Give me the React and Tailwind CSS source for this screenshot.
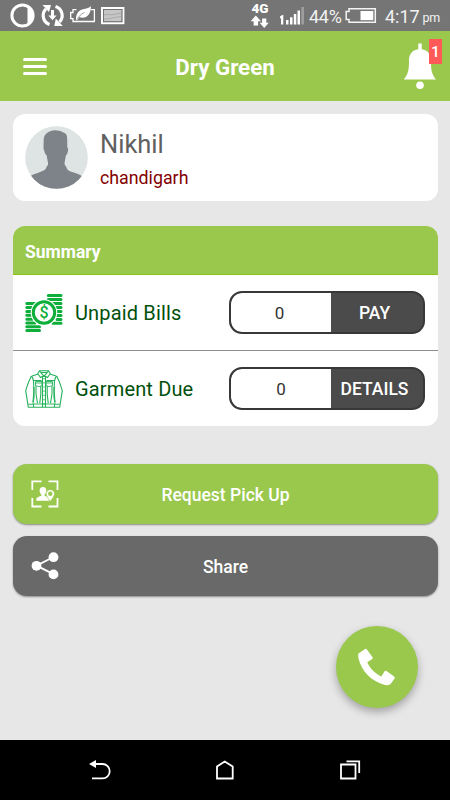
import React from 'react';

// Android status bar: notification icons on the left, signal and clock on the right.
function StatusBar() {
  return (
    <div className="flex h-[31px] items-center bg-[#757575] text-white">
      <svg className="ml-[10px] h-[31px] w-[116px] shrink-0" viewBox="10 0 116 31" fill="none">
        <circle cx="22.5" cy="15.5" r="10.6" stroke="#fff" strokeWidth="3" />
        <path d="M27.5 6a10.6 10.6 0 0 1 0 19z" fill="#fff" />
        <g stroke="#fff" strokeWidth="3.2">
          <path d="M49.5 24.4A9.400 9.400 0 0 1 46 8.800" />
          <path d="M55.500 6.500A9.400 9.400 0 0 1 59.500 22" />
        </g>
        <path d="M42.5 5h8.500l-2 7z" fill="#fff" />
        <path d="M62.800 26h-8.500l1.500-7.500z" fill="#fff" />
        <path d="M51 10h3v5.500h2.600l-4.100 4.700-4.100-4.700H51z" fill="#fff" />
        <path d="M76.500 9.700H73v2.800h-2.300v6.200H73v2.800h21.400V9.700h-3.500" stroke="#fff" strokeWidth="1.300" />
        <path
          d="M76 20c-.3-6 2.500-9.800 7-10.800 3-.6 5.500-.7 8-2.900-.1 5.500-1.800 9-5 10.600-2.600 1.200-5 .8-6.500.1L77 20.500z"
          fill="#fff"
        />
        <path d="M77 19.500c2-3.500 4-5.500 7.500-7" stroke="#757575" strokeWidth="0.7" />
        <rect x="102" y="8" width="21.400" height="15.200" stroke="#fff" strokeWidth="2" />
        <rect x="103.500" y="9.500" width="18.400" height="12.200" fill="#c6c6c6" stroke="#686868" strokeWidth="0.8" />
        <path d="M104 15c5-1.500 7 .5 10-.5 3-.8 5-1 7.500-1.500M104 19c5 .5 8-1.500 17.500-2.500" stroke="#a8a8a8" strokeWidth="1" />
      </svg>
      <svg className="ml-[124px] h-[31px] w-[20px] shrink-0" viewBox="250 0 20 31">
        <text x="251.500" y="12.600" textLength="17" lengthAdjust="spacingAndGlyphs" fill="#fff" fontFamily="Roboto, sans-serif" fontSize="13.500" fontWeight="900">4G</text>
        <path d="M255.800 15.500l5.200 5.700h-2.900v4.300h-4.500v-4.300h-2.900z" fill="#fff" />
        <path d="M264.200 28l-4.600-5.300h2.500v-4.300h4.200v4.300h2.500z" fill="#fff" />
      </svg>
      <svg className="ml-[9px] h-[31px] w-[26px] shrink-0" viewBox="279 0 26 31">
        <path d="M280 16.500l2.300-1.500h1v9.500H281v-6.600l-1 .6z" fill="#fff" />
        <path d="M286 20h2.500v4.500H286zM290 17.300h2.500v7.200H290zM293.800 14h2.500v10.500h-2.500zM297.500 10.500h2.500v14h-2.500z" fill="#fff" />
        <path d="M301.300 7h2.700v17.500h-2.700z" fill="#9d9d9d" />
      </svg>
      <span className="ml-[4px] mt-[3px] w-[34px] whitespace-nowrap text-[18px] leading-none tracking-[-0.3px] text-[#f2f2f2]">44%</span>
      <svg className="ml-[1px] h-[31px] w-[34px] shrink-0" viewBox="344 0 34 31" fill="none">
        <path d="M349 8.800h26.300v13.500H349v-2.700h-2.800v-8H349z" stroke="#f4f4f4" strokeWidth="1.500" />
        <path d="M360.500 11h12.800v9.200h-12.800z" fill="#fff" />
      </svg>
      <span className="ml-[7px] mt-[3px] w-[37.500px] whitespace-nowrap text-[18px] leading-none text-[#f2f2f2]">4:17</span>
      <span className="mt-[6px] text-[12.500px] leading-none tracking-[-0.300px] text-[#f2f2f2]">pm</span>
    </div>
  );
}

function Header() {
  return (
    <div className="flex h-[70px] bg-[#99c84d] text-white">
      <div className="ml-[23px] mt-[27px] flex w-[25px] flex-col gap-[3.400px]">
        <span className="h-[3.400px] w-[24px] rounded-sm bg-white" />
        <span className="h-[3.400px] w-[24px] rounded-sm bg-white" />
        <span className="h-[3.400px] w-[24px] rounded-sm bg-white" />
      </div>
      <h1 className="mt-[21px] flex-1 pl-[2px] text-center text-[22.300px] leading-[30px] font-bold">Dry Green</h1>
      <div className="relative w-[50px]">
        <svg className="h-[70px] w-[50px]" viewBox="400 31 50 70" fill="#fff">
          <path d="M418.300 43.500h3.400v5.700c6.300.8 9.300 5.300 9.300 11.300 0 9.500.5 13.500 5 19h-32.200c4.500-5.500 5.200-9.500 5.200-19 0-6 3-10.500 9.300-11.300z" />
          <circle cx="420" cy="85.200" r="3.800" />
        </svg>
        <span className="absolute top-[8px] left-[29px] h-[25px] w-[13px] bg-[#ff5a58] text-center text-[15px] leading-[27px] font-medium">1</span>
      </div>
    </div>
  );
}

function Avatar() {
  return (
    <svg className="h-[63px] w-[63px] shrink-0" viewBox="0 0 63 63">
      <defs>
        <clipPath id="avatarClip">
          <circle cx="31.500" cy="31.500" r="31.300" />
        </clipPath>
      </defs>
      <g clipPath="url(#avatarClip)">
        <path d="M0 0h63v63H0z" fill="#dee3e4" />
        <path
          d="M18.500 21.500l.2-7.500c0-3 1-6 4-7.500C26.500 4 30 3.800 34 4.700c2 .4 3 .9 4.500 1.900 3 .8 3.700 3.400 3.700 6.400l.1 8.500c1.200.2 1 2.500.4 4.500-.3 1.500-.7 3-1.700 3-.5 3.500-1.500 7-1.500 9 .4 1.500 1.500 2 2 3.500.5 2.500 2.500 3.500 5 4.300 4 1.300 8 2.700 11 4.700V63H5V50.500c3-2 6-3 9.500-4.200 3.500-1.100 6.500-2.500 6.800-5 .5-1.300 1.800-1.800 1.800-3.300 0-2-1-5-1.500-9-1-.1-1.700-1.500-2-3-.6-2.300-1.500-4.300-1.100-4.500z"
          fill="#7e8289"
        />
      </g>
    </svg>
  );
}

function MoneyIcon() {
  return (
    <svg className="h-[38px] w-[38px] shrink-0" viewBox="0 0 38 38">
      <g stroke="#0eae3b" strokeWidth="3" strokeLinecap="round">
        <path d="M23.300 1.500h12.700M23.300 5.500h12.700M28 9.500h8M30 13.500h6M32 17.500h4M32 21.500h4M32 25.500h4M28 29.300h8" />
        <path d="M1.800 9.500H10M1.800 13.500H7M1.800 17.500H6M1.800 21.300H6M1.800 25.200H7M1.800 29H10M1.800 32.800h12.700M1.800 36.500h12.700" />
      </g>
      <circle cx="19" cy="18.500" r="13.300" fill="#fff" />
      <circle cx="19" cy="18.500" r="10.700" fill="#fff" stroke="#0eae3b" strokeWidth="3" />
      <text x="19" y="24.200" textAnchor="middle" fill="#0eae3b" fontFamily="Roboto, sans-serif" fontSize="16" fontWeight="500">$</text>
    </svg>
  );
}

function JacketIcon() {
  return (
    <svg className="h-[38px] w-[38px] shrink-0" viewBox="0 0 38 38" fill="none" stroke="#27b35b" strokeWidth="1.1">
      <path d="M14.500.8h9l2 3.500c3 1 6 1.800 6.600 2.400 2.300 4.500 4 9.500 5.200 14l-2.600 16.500H3.300L.7 20.700C2 16 3.700 11 6 6.700c.6-.6 3.500-1.400 6.500-2.400z" />
      <path d="M14.500.8L19 6.300 23.500.8M13 4l2.500 3.500L19 5.500l3.500 2L25 4M15.500 2.500h7" />
      <path d="M6.500 6.500c3 2.500 2 6 2.300 14L8 33.500M31.500 6.500c-3 2.500-2 6-2.300 14l.8 13M8 10.500h8.500M21.500 10.500H30" />
      <path d="M17.500 6.500v30.500M20.500 6.500v30.500M3.300 34.300h5.200M29.500 34.300h5.200M8.500 37v-3h21v3" />
      <path d="M10.500 11.500h6.500v4l-3.200 1.200-3.300-1.200zM21 11.500h6.500v4l-3.300 1.200-3.200-1.200zM10.500 13h6.500M21 13h6.500" strokeWidth="0.9" />
      <path d="M11 16v8l1.500 9M15.800 16v8l-1 9M22.200 16v8l1 9M27 16v8l-1.500 9" />
      <path d="M9 17v11l-1 4M29 17v11l1 4" />
      <path d="M19 8v27" strokeDasharray="1.200 3" />
    </svg>
  );
}

function SummaryRow({ icon, label, value, action, className, valueClass }) {
  return (
    <div className={`flex items-center pl-[12.500px] pr-[12.500px] ${className}`}>
      {icon}
      <span className="ml-[12px] flex-1 whitespace-nowrap text-[20px] tracking-[0.15px] text-[#00500b]">{label}</span>
      <div className="flex h-[43px] w-[196px] overflow-hidden rounded-[13px] border-2 border-[#383838] bg-[#4b4b4b]">
        <span className={`w-[100px] rounded-l-[11px] bg-white text-center text-[17px] leading-[40px] text-[#333] ${valueClass}`}>{value}</span>
        <span className="flex-1 pr-[5px] text-center text-[17.500px] leading-[40px] font-medium text-white">{action}</span>
      </div>
    </div>
  );
}

function ActionButton({ icon, label, className }) {
  return (
    <button className={`flex h-[60px] w-full items-center rounded-[14px] px-[18px] shadow-[0_1px_2px_rgba(0,0,0,0.4)] ${className}`}>
      {icon}
      <span className="flex-1 pr-[27px] pt-[2px] text-center text-[17.500px] font-medium text-white">{label}</span>
    </button>
  );
}

const pickupIcon = (
  <svg className="h-[28px] w-[28px] shrink-0" viewBox="0 0 28 28" fill="none">
    <path d="M1.300 10V1.300H10.500M17.500 1.300h9V10M26.500 18v8.500h-9M10.500 26.500H1.300V18" stroke="#fff" strokeWidth="1.800" />
    <path d="M12 7c2.200 0 3.400 1.700 3.300 3.800 0 1.600-.8 3.200-1.700 3.700v1.200l3.200 1.300 1.700 3.800H5.300c0-3 .6-3.800 5.100-5.100v-1.200c-1-.5-1.700-2.100-1.800-3.700C8.500 8.700 9.800 7 12 7z" fill="#fff" />
    <path d="M19.300 9.700c-2.500 0-4.200 1.800-4.200 4 0 2.800 4.200 7.600 4.200 7.600s4.200-4.800 4.200-7.600c0-2.200-1.700-4-4.200-4z" fill="#fff" stroke="#99c84d" strokeWidth="0.700" />
    <circle cx="19.300" cy="13.800" r="2.200" fill="#99c84d" />
  </svg>
);

const shareIcon = (
  <svg className="h-[28px] w-[28px] shrink-0" viewBox="0 0 28 28" fill="#fff">
    <path d="M22.500 5L5.500 13.700l17 8.500" fill="none" stroke="#fff" strokeWidth="1.900" />
    <circle cx="22.500" cy="5.200" r="4.900" />
    <circle cx="5.500" cy="13.800" r="4.900" />
    <circle cx="22.500" cy="22.400" r="4.900" />
  </svg>
);

function NavBar() {
  return (
    <div className="flex h-[60px] items-center justify-between bg-black pr-[88px] pl-[88px]">
      <svg className="h-[22px] w-[24px]" viewBox="88 759 24 22" fill="none">
        <path d="M95 764h7.500a7.200 7.200 0 0 1 0 14.400H92" stroke="#fff" strokeWidth="1.800" />
        <path d="M89 764l7-4v8z" fill="#fff" />
      </svg>
      <svg className="h-[22px] w-[24px]" viewBox="213 759 24 22" fill="none">
        <path d="M217 766.500l7.700-5 8 5v12H217z" stroke="#fff" strokeWidth="1.800" />
      </svg>
      <svg className="h-[22px] w-[24px]" viewBox="338 759 24 22" fill="none" stroke="#fff" strokeWidth="1.800">
        <path d="M341 764.500h14.500v14H341zM346.500 761.300h12.700V773" />
      </svg>
    </div>
  );
}

export default function App() {
  return (
    <div className="relative flex h-[800px] w-[450px] flex-col overflow-hidden bg-[#e7e7e7] font-[Roboto,sans-serif]">
      <StatusBar />
      <Header />

      <main className="flex-1 px-[12.500px] pt-[13px]">
        <section className="flex h-[87px] items-center rounded-[12px] bg-white pl-[12.500px]">
          <Avatar />
          <div className="ml-[12px] flex flex-col pt-[4px]">
            <span className="text-[25.500px] leading-[32px] text-[#606060]">Nikhil</span>
            <span className="mt-[4px] text-[17.800px] leading-[28px] text-[#820000]">chandigarh</span>
          </div>
        </section>

        <section className="mt-[25px] overflow-hidden rounded-[12px] bg-white">
          <div className="h-[49px] border-b border-[#8cc21c] bg-[#99c84d] pl-[12.500px] pt-[2px] text-[17.500px] leading-[49px] font-bold text-white">
            Summary
          </div>
          <SummaryRow icon={<MoneyIcon />} label="Unpaid Bills" value="0" action="PAY" className="h-[75px]" valueClass="pr-[3px]" />
          <SummaryRow icon={<JacketIcon />} label="Garment Due" value="0" action="DETAILS" className="h-[76px] border-t border-[#8e8e8e]" valueClass="" />
        </section>

        <div className="mt-[38px] flex flex-col gap-[12px]">
          <ActionButton icon={pickupIcon} label="Request Pick Up" className="bg-[#99c84d]" />
          <ActionButton icon={shareIcon} label="Share" className="bg-[#696969]" />
        </div>
      </main>

      <NavBar />

      {/* floating call button */}
      <button className="absolute top-[626px] left-[336px] h-[82px] w-[82px] rounded-full bg-[#99c84d] shadow-[0_4px_9px_rgba(0,0,0,0.3)]">
        <svg className="h-[82px] w-[82px]" viewBox="336 626 82 82" fill="#fff">
          <path d="M358.500 653.500l6.200-4.300c.8-.6 1.700-.5 2.200.2l5.500 7.700c.6.8.4 1.500-.4 2.100l-4.800 3c3 6.500 7.500 11 14.200 14.200l3-5c.6-.8 1.300-.9 2.100-.4l7.600 5.500c.8.600.9 1.400.3 2.200l-3.800 5.400c-1.200 1.200-4 1.400-6.500.7-13-3.800-22.500-13.500-25.500-26-.5-2.300-.5-4.300-.1-5.300z" />
        </svg>
      </button>
    </div>
  );
}
